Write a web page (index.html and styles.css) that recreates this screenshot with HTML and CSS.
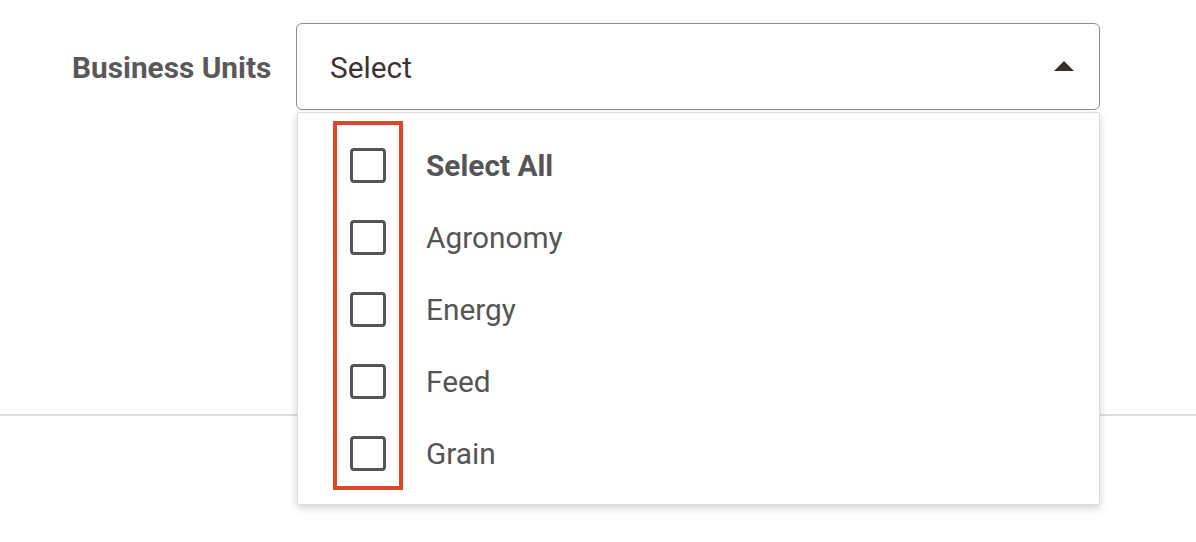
FILE: index.html
```html
<!DOCTYPE html>
<html>
<head>
<meta charset="utf-8">
<link rel="stylesheet" href="styles.css">
</head>
<body>
<div class="page">
  <div class="form-row">
    <label class="field-label">Business Units</label>
    <div class="select-wrap">
      <div class="select-box">
        <span class="select-value">Select</span>
        <span class="caret"></span>
      </div>
      <div class="dropdown">
        <ul class="options">
          <li class="option all"><span class="checkbox"></span><span class="opt-text">Select All</span></li>
          <li class="option"><span class="checkbox"></span><span class="opt-text">Agronomy</span></li>
          <li class="option"><span class="checkbox"></span><span class="opt-text">Energy</span></li>
          <li class="option"><span class="checkbox"></span><span class="opt-text">Feed</span></li>
          <li class="option"><span class="checkbox"></span><span class="opt-text">Grain</span></li>
        </ul>
        <div class="highlight"></div>
      </div>
    </div>
  </div>
  <div class="divider"></div>
</div>
</body>
</html>
```

FILE: styles.css
```css
* { box-sizing: border-box; }
html, body { margin: 0; padding: 0; background: #fff; }
body { font-family: Roboto, "Noto Sans", Arial, sans-serif; color: #555; }

.page { width: 1196px; height: 542px; overflow: hidden; }

.form-row {
  display: flex;
  padding: 23px 0 0 72px;
  height: 414px;
  align-items: flex-start;
}

.field-label {
  width: 224px;
  height: 87px;
  display: flex;
  align-items: center;
  font-size: 29.8px;
  font-weight: 700;
  color: #595959;
  padding-top: 2px;
}

.select-wrap {
  position: relative;
  width: 804px;
}

.select-box {
  height: 87px;
  border: 1.5px solid #8c8c8c;
  border-radius: 6px;
  display: flex;
  align-items: center;
  justify-content: space-between;
  padding: 0 25px 0 33px;
  background: #fff;
}

.select-value {
  font-size: 29.8px;
  color: #3b3531;
  padding-top: 1px;
}

.caret {
  width: 0;
  height: 0;
  border-left: 10px solid transparent;
  border-right: 10px solid transparent;
  border-bottom: 10px solid #3a2f28;
  margin-bottom: 2px;
}

.dropdown {
  position: absolute;
  left: 1px;
  top: 89px;
  width: 803px;
  background: #fff;
  border: 1px solid #dcdcdc;
  border-radius: 2px;
  box-shadow: 0 3px 8px rgba(0,0,0,0.18);
  padding: 16px 0 15px;
  z-index: 2;
}

.options { list-style: none; margin: 0; padding: 0; }

.option {
  height: 72px;
  display: flex;
  align-items: center;
  padding-left: 52px;
  font-size: 29.8px;
  color: #555;
}

.option.all .opt-text { font-weight: 700; }

.checkbox {
  width: 36px;
  height: 35px;
  border: 3.5px solid #555;
  border-radius: 4px;
  margin-right: 40px;
  flex: none;
}

.highlight {
  position: absolute;
  left: 35px;
  top: 8px;
  width: 70px;
  height: 369px;
  border: 4px solid #e0442b;
}

.divider {
  height: 2px;
  background: #dedede;
}
```
